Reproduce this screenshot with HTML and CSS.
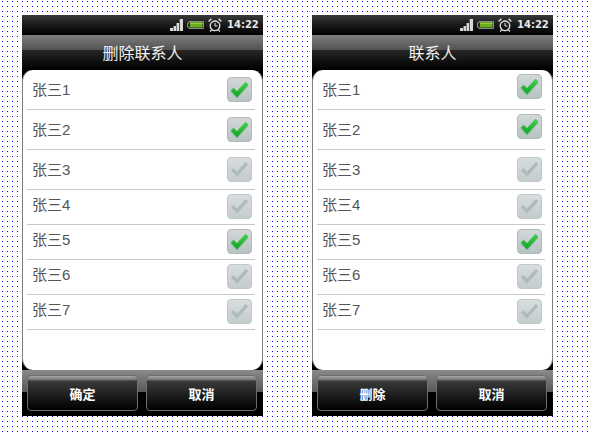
FILE: index.html
```html
<!DOCTYPE html>
<html lang="zh">
<head>
<meta charset="utf-8">
<title>联系人</title>
<link rel="stylesheet" href="styles.css">
</head>
<body>
<svg class="defs" width="0" height="0" aria-hidden="true">
  <defs>
    <linearGradient id="boxfill" x1="0" y1="0" x2="0" y2="1">
      <stop offset="0" stop-color="#d3d9da"/>
      <stop offset="1" stop-color="#b8c1c3"/>
    </linearGradient>
    <linearGradient id="boxfill2" x1="0" y1="0" x2="0" y2="1">
      <stop offset="0" stop-color="#d8dedf"/>
      <stop offset="1" stop-color="#c3cbcd"/>
    </linearGradient>
    <linearGradient id="green" x1="0" y1="0" x2="0" y2="1">
      <stop offset="0" stop-color="#3fd04c"/>
      <stop offset="1" stop-color="#17ad2c"/>
    </linearGradient>
    <symbol id="on" viewBox="0 0 25 25">
      <rect x="0.5" y="0.5" width="24" height="24" rx="3.500" fill="url(#boxfill)" stroke="#b0b9bb"/>
      <path d="M5.200 12.200 L10 17.200 L20 6.200" fill="none" stroke="#0f9a2a" stroke-opacity=".35" stroke-width="4.400" transform="translate(0 1)"/>
      <path d="M5.200 12.200 L10 17.200 L20 6.200" fill="none" stroke="url(#green)" stroke-width="4"/>
    </symbol>
    <symbol id="off" viewBox="0 0 25 25">
      <rect x="0.5" y="0.5" width="24" height="24" rx="3.500" fill="url(#boxfill2)" stroke="#bfc7c9"/>
      <path d="M5.200 12.200 L10 17.200 L20 6.200" fill="none" stroke="#b0b9bc" stroke-width="3.400"/>
    </symbol>
    <symbol id="signal" viewBox="0 0 13 12">
      <path d="M0 9h3v3H0zM3.500 7h2.500v5H3.500zM6.500 4h2.500v8H6.500zM9.700 0H13v12H9.700z" fill="#d8d8d8"/>
    </symbol>
    <symbol id="battery" viewBox="0 0 17 10">
      <path d="M2 1.500h14.500v7H2v-1.500H.5v-4H2z" fill="#222" stroke="#8a8f8a"/>
      <rect x="3" y="2.500" width="12.500" height="5" fill="#6cb01e"/>
      <rect x="3" y="2.500" width="12.500" height="1.500" fill="#92d03e"/>
    </symbol>
    <symbol id="alarm" viewBox="0 0 14 14">
      <circle cx="7" cy="7.800" r="4.800" fill="none" stroke="#e4e4e4" stroke-width="1.300"/>
      <path d="M7 5v3h2.500" fill="none" stroke="#e4e4e4"/>
      <path d="M.6 3.400 3.400.8M13.400 3.400 10.600.8M3.500 12l-1.300 1.500M10.500 12l1.300 1.500" fill="none" stroke="#e4e4e4" stroke-width="1.300"/>
    </symbol>
  </defs>
</svg>

<section class="phone">
  <header class="status">
    <svg class="ic-signal"><use href="#signal"/></svg>
    <svg class="ic-battery"><use href="#battery"/></svg>
    <svg class="ic-alarm"><use href="#alarm"/></svg>
    <span class="time">14:22</span>
  </header>
  <h1 class="title">删除联系人</h1>
  <div class="panel">
    <ul class="list">
      <li class="row tall"><span class="name">张三1</span><svg class="box"><use href="#on"/></svg></li>
      <li class="row tall"><span class="name">张三2</span><svg class="box"><use href="#on"/></svg></li>
      <li class="row tall"><span class="name">张三3</span><svg class="box"><use href="#off"/></svg></li>
      <li class="row"><span class="name">张三4</span><svg class="box"><use href="#off"/></svg></li>
      <li class="row"><span class="name">张三5</span><svg class="box"><use href="#on"/></svg></li>
      <li class="row"><span class="name">张三6</span><svg class="box"><use href="#off"/></svg></li>
      <li class="row"><span class="name">张三7</span><svg class="box"><use href="#off"/></svg></li>
    </ul>
  </div>
  <footer class="actions">
    <button class="btn">确定</button>
    <button class="btn">取消</button>
  </footer>
</section>

<section class="phone">
  <header class="status">
    <svg class="ic-signal"><use href="#signal"/></svg>
    <svg class="ic-battery"><use href="#battery"/></svg>
    <svg class="ic-alarm"><use href="#alarm"/></svg>
    <span class="time">14:22</span>
  </header>
  <h1 class="title">联系人</h1>
  <div class="panel">
    <ul class="list">
      <li class="row tall"><span class="name">张三1</span><svg class="box raised"><use href="#on"/></svg></li>
      <li class="row tall"><span class="name">张三2</span><svg class="box raised"><use href="#on"/></svg></li>
      <li class="row tall"><span class="name">张三3</span><svg class="box"><use href="#off"/></svg></li>
      <li class="row"><span class="name">张三4</span><svg class="box"><use href="#off"/></svg></li>
      <li class="row"><span class="name">张三5</span><svg class="box"><use href="#on"/></svg></li>
      <li class="row"><span class="name">张三6</span><svg class="box"><use href="#off"/></svg></li>
      <li class="row"><span class="name">张三7</span><svg class="box"><use href="#off"/></svg></li>
    </ul>
  </div>
  <footer class="actions">
    <button class="btn">删除</button>
    <button class="btn">取消</button>
  </footer>
</section>
</body>
</html>
```
FILE: styles.css
```css
* { box-sizing: border-box; }
html, body { margin: 0; height: 100%; overflow: hidden; }
body {
  display: flex;
  align-items: flex-start;
  gap: 49px;
  padding: 15px 0 0 22px;
  background-color: #fff;
  background-image:
    linear-gradient(to bottom, #fff 1px, transparent 1px, transparent 2px, #fff 2px),
    linear-gradient(to right, transparent 2px, #00f 2px, #00f 3px, transparent 3px);
  background-size: 5px 5px;
  background-repeat: repeat;
  font-family: "Liberation Sans", "Noto Sans CJK SC", sans-serif;
}
.defs { position: absolute; }
.phone {
  width: 241px;
  height: 401px;
  display: flex;
  flex-direction: column;
  background: #000;
}
.status {
  height: 20px;
  display: flex;
  align-items: center;
  justify-content: flex-end;
  padding-right: 5px;
  background: linear-gradient(#3a3a3a, #1c1c1c 45%, #000 100%);
}
.ic-signal { width: 13px; height: 12px; margin-right: 4px; }
.ic-battery { width: 17px; height: 10px; margin-right: 4px; }
.ic-alarm { width: 14px; height: 14px; margin-right: 5px; }
.time {
  width: 31px;
  font-family: "DejaVu Sans", sans-serif;
  font-weight: 700;
  font-size: 10px;
  line-height: 12px;
  color: #e8e8e8;
  white-space: nowrap;
}
.title {
  height: 35px;
  margin: 0;
  padding-top: 8px;
  text-align: center;
  font-size: 16px;
  font-weight: 400;
  line-height: 22px;
  color: #f2f2f2;
  background: linear-gradient(#7d7d7d, #525252 15px, #262626 15px, #000 35px);
}
.panel {
  height: 300px;
  background: #fff;
  border: solid #808080;
  border-width: 0 1px;
  border-radius: 11px;
  padding: 0 7px 0 4px;
}
.list {
  list-style: none;
  margin: 0;
  padding: 0;
}
.row {
  height: 35px;
  display: flex;
  align-items: center;
  justify-content: space-between;
  padding: 0 3px 0 5px;
  border-bottom: 1px solid #c8c8c8;
  font-size: 15px;
  color: #555;
}
.row.tall { height: 40px; }
.name { margin-bottom: 7px; }
.tall .name { margin-bottom: 2px; }
.box { width: 25px; height: 25px; margin-bottom: 2px; }
.tall .box { margin-bottom: 0; }
.tall .box.raised { margin-bottom: 6px; }
.actions {
  flex: 1;
  display: flex;
  gap: 8px;
  padding: 5px 6px 5px 5px;
  background: linear-gradient(#8a8a8a, #585858 22px, #000 22px);
}
.btn {
  flex: 1;
  padding: 0;
  border: 1px solid #6e6e6e;
  border-radius: 4px;
  color: #fff;
  font-family: inherit;
  font-size: 13px;
  font-weight: 700;
  background: linear-gradient(#a8a8a8, #707070 4px, #3a3a3a 5px, #000 100%);
}
```
